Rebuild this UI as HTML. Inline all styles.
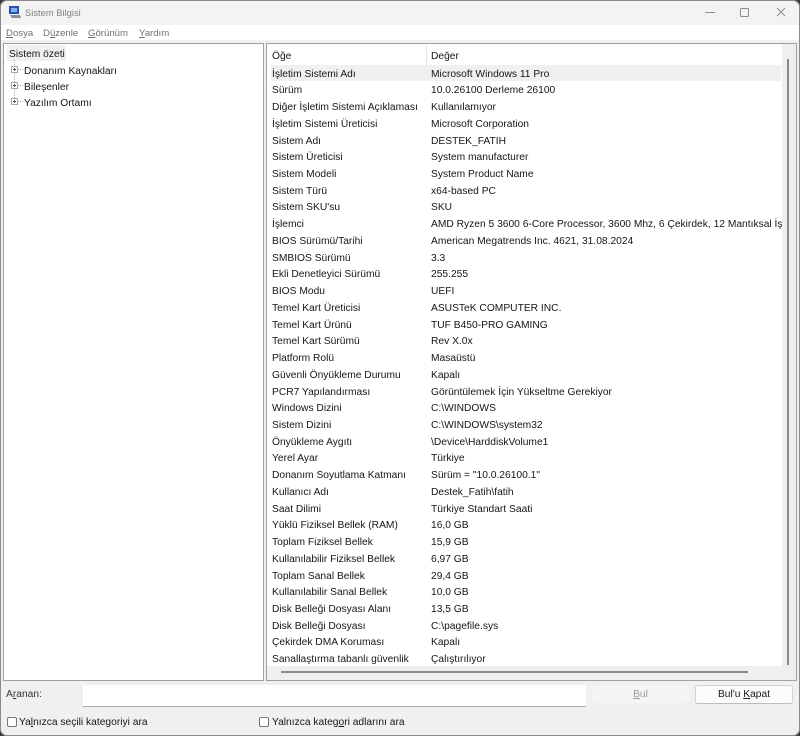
<!DOCTYPE html>
<html lang="tr"><head><meta charset="utf-8"><title>Sistem Bilgisi</title>
<style>
html,body{margin:0;padding:0;background:#3a3a3a}
#w{position:relative;width:800px;height:736px;background:#f0f0f0;overflow:hidden;font-family:"Liberation Sans",sans-serif;font-size:10.25px;color:#161616;border-radius:7px;box-shadow:inset 0 0 0 1px #8a8a8a}
.a{position:absolute;white-space:nowrap}
u{text-underline-offset:1px}
.r{position:absolute;white-space:nowrap;line-height:16px;height:16px}
.k{left:272px}.v{left:431px}
.box{position:absolute;background:#fff;border:1px solid #a0a0a0;box-sizing:border-box}
.m{position:absolute;top:27px;white-space:nowrap;line-height:13px;color:#707070;font-size:9.6px}
</style></head><body><div id="w">
<div class="a" style="left:1px;top:1px;width:798px;height:24px;background:#f3f3f3;border-radius:7px 7px 0 0"></div>
<svg class="a" style="left:8px;top:5px" width="14" height="14" viewBox="0 0 14 14"><rect x="1" y="1" width="10" height="8" fill="#2b4fb0"/><rect x="3" y="3" width="6" height="4" fill="#7fb0e8"/><path d="M2 10h10l1 3H4z" fill="#8a8fa8"/></svg>
<div class="a" style="left:25px;top:6px;color:#808080;font-size:9.4px;line-height:13px">Sistem Bilgisi</div>
<svg class="a" style="left:700px;top:0" width="100" height="26" viewBox="0 0 100 26" fill="none" stroke="#8c8c8c"><path d="M5 12.500h10"/><rect x="40.500" y="8.500" width="8" height="8" rx="1"/><path d="M77 8l8 8M85 8l-8 8"/></svg>
<div class="a" style="left:1px;top:25px;width:798px;height:15px;background:#fff"></div>
<div class="m" style="left:6px"><u>D</u>osya</div>
<div class="m" style="left:43px">D<u>ü</u>zenle</div>
<div class="m" style="left:88px"><u>G</u>örünüm</div>
<div class="m" style="left:139px"><u>Y</u>ardım</div>

<div class="box" style="left:3px;top:43px;width:261px;height:638px"></div>
<div class="a" style="left:7px;top:45px;width:59px;height:15.500px;background:#f0f0f0"></div>
<div class="r" style="left:9px;top:47px">Sistem özeti</div>
<div class="r" style="left:24px;top:64px">Donanım Kaynakları</div>
<div class="r" style="left:24px;top:80px">Bileşenler</div>
<div class="r" style="left:24px;top:96px">Yazılım Ortamı</div>
<svg class="a" style="left:10px;top:60px" width="14" height="50" viewBox="0 0 14 50" fill="none" stroke="#aaa"><path d="M4.500 0v6M4.500 13v10M4.500 29v10M8 9.500h5M8 25.500h5M8 41.500h5" stroke-dasharray="1 1"/><rect x="1.500" y="6.500" width="6" height="6" fill="#fff"/><rect x="1.500" y="22.500" width="6" height="6" fill="#fff"/><rect x="1.500" y="38.500" width="6" height="6" fill="#fff"/><path d="M3 9.500h3M4.500 8v3M3 25.500h3M4.500 24v3M3 41.500h3M4.500 40v3" stroke="#555"/></svg>

<div class="box" style="left:266px;top:43px;width:531px;height:638px"></div>
<div class="a" style="left:426px;top:45px;width:1px;height:20px;background:#e5e5e5"></div>
<div class="r" style="left:272px;top:49px">Öğe</div>
<div class="r" style="left:431px;top:49px">Değer</div>
<div class="a" style="left:271px;top:65px;width:510px;height:16px;background:#f0f0f0"></div>
<div class="a" style="left:782px;top:44px;width:14px;height:636px;background:#efefef"></div>
<div class="a" style="left:787px;top:59px;width:2px;height:606px;background:#8a8a8a"></div>
<div class="a" style="left:267px;top:666px;width:515px;height:14px;background:#efefef"></div>
<div class="a" style="left:281px;top:671px;width:467px;height:2px;background:#8a8a8a"></div>

<div style="position:absolute;left:0;top:1.700px;width:782px;height:664.300px;overflow:hidden">
<div class="r k" style="top:65px">İşletim Sistemi Adı</div><div class="r v" style="top:65px">Microsoft Windows 11 Pro</div>
<div class="r k" style="top:81.700px">Sürüm</div><div class="r v" style="top:81.700px">10.0.26100 Derleme 26100</div>
<div class="r k" style="top:98.500px">Diğer İşletim Sistemi Açıklaması</div><div class="r v" style="top:98.500px">Kullanılamıyor</div>
<div class="r k" style="top:115.200px">İşletim Sistemi Üreticisi</div><div class="r v" style="top:115.200px">Microsoft Corporation</div>
<div class="r k" style="top:131.900px">Sistem Adı</div><div class="r v" style="top:131.900px">DESTEK_FATIH</div>
<div class="r k" style="top:148.600px">Sistem Üreticisi</div><div class="r v" style="top:148.600px">System manufacturer</div>
<div class="r k" style="top:165.400px">Sistem Modeli</div><div class="r v" style="top:165.400px">System Product Name</div>
<div class="r k" style="top:182.100px">Sistem Türü</div><div class="r v" style="top:182.100px">x64-based PC</div>
<div class="r k" style="top:198.800px">Sistem SKU'su</div><div class="r v" style="top:198.800px">SKU</div>
<div class="r k" style="top:215.600px">İşlemci</div><div class="r v" style="top:215.600px">AMD Ryzen 5 3600 6-Core Processor, 3600 Mhz, 6 Çekirdek, 12 Mantıksal İş</div>
<div class="r k" style="top:232.300px">BIOS Sürümü/Tarihi</div><div class="r v" style="top:232.300px">American Megatrends Inc. 4621, 31.08.2024</div>
<div class="r k" style="top:249px">SMBIOS Sürümü</div><div class="r v" style="top:249px">3.3</div>
<div class="r k" style="top:265.800px">Ekli Denetleyici Sürümü</div><div class="r v" style="top:265.800px">255.255</div>
<div class="r k" style="top:282.500px">BIOS Modu</div><div class="r v" style="top:282.500px">UEFI</div>
<div class="r k" style="top:299.200px">Temel Kart Üreticisi</div><div class="r v" style="top:299.200px">ASUSTeK COMPUTER INC.</div>
<div class="r k" style="top:315.900px">Temel Kart Ürünü</div><div class="r v" style="top:315.900px">TUF B450-PRO GAMING</div>
<div class="r k" style="top:332.700px">Temel Kart Sürümü</div><div class="r v" style="top:332.700px">Rev X.0x</div>
<div class="r k" style="top:349.400px">Platform Rolü</div><div class="r v" style="top:349.400px">Masaüstü</div>
<div class="r k" style="top:366.100px">Güvenli Önyükleme Durumu</div><div class="r v" style="top:366.100px">Kapalı</div>
<div class="r k" style="top:382.900px">PCR7 Yapılandırması</div><div class="r v" style="top:382.900px">Görüntülemek İçin Yükseltme Gerekiyor</div>
<div class="r k" style="top:399.600px">Windows Dizini</div><div class="r v" style="top:399.600px">C:\WINDOWS</div>
<div class="r k" style="top:416.300px">Sistem Dizini</div><div class="r v" style="top:416.300px">C:\WINDOWS\system32</div>
<div class="r k" style="top:433.100px">Önyükleme Aygıtı</div><div class="r v" style="top:433.100px">\Device\HarddiskVolume1</div>
<div class="r k" style="top:449.800px">Yerel Ayar</div><div class="r v" style="top:449.800px">Türkiye</div>
<div class="r k" style="top:466.500px">Donanım Soyutlama Katmanı</div><div class="r v" style="top:466.500px">Sürüm = "10.0.26100.1"</div>
<div class="r k" style="top:483.200px">Kullanıcı Adı</div><div class="r v" style="top:483.200px">Destek_Fatih\fatih</div>
<div class="r k" style="top:500px">Saat Dilimi</div><div class="r v" style="top:500px">Türkiye Standart Saati</div>
<div class="r k" style="top:516.700px">Yüklü Fiziksel Bellek (RAM)</div><div class="r v" style="top:516.700px">16,0 GB</div>
<div class="r k" style="top:533.400px">Toplam Fiziksel Bellek</div><div class="r v" style="top:533.400px">15,9 GB</div>
<div class="r k" style="top:550.200px">Kullanılabilir Fiziksel Bellek</div><div class="r v" style="top:550.200px">6,97 GB</div>
<div class="r k" style="top:566.900px">Toplam Sanal Bellek</div><div class="r v" style="top:566.900px">29,4 GB</div>
<div class="r k" style="top:583.600px">Kullanılabilir Sanal Bellek</div><div class="r v" style="top:583.600px">10,0 GB</div>
<div class="r k" style="top:600.400px">Disk Belleği Dosyası Alanı</div><div class="r v" style="top:600.400px">13,5 GB</div>
<div class="r k" style="top:617.100px">Disk Belleği Dosyası</div><div class="r v" style="top:617.100px">C:\pagefile.sys</div>
<div class="r k" style="top:633.800px">Çekirdek DMA Koruması</div><div class="r v" style="top:633.800px">Kapalı</div>
<div class="r k" style="top:650.500px">Sanallaştırma tabanlı güvenlik</div><div class="r v" style="top:650.500px">Çalıştırılıyor</div>
</div>

<div class="r" style="left:6px;top:687px;color:#333">A<u>r</u>anan:</div>
<div class="a" style="left:83px;top:685px;width:503px;height:22px;background:#fff;border-bottom:1px solid #aaa;box-sizing:border-box"></div>
<div class="a" style="left:592px;top:686px;width:97px;height:17px;background:#f5f5f5;border-radius:3px;text-align:center;line-height:17px;color:#9a9a9a"><u>B</u>ul</div>
<div class="a" style="left:695px;top:685px;width:98px;height:18.500px;background:#fbfbfb;border:1px solid #d4d4d4;border-bottom-color:#bcbcbc;border-radius:3px;box-sizing:border-box;text-align:center;line-height:17px;color:#1a1a1a">Bul'u <u>K</u>apat</div>
<div class="a" style="left:7px;top:717px;width:8px;height:8px;background:#fff;border:1px solid #777;border-radius:2px"></div>
<div class="r" style="left:19px;top:715px">Ya<u>l</u>nızca seçili kategoriyi ara</div>
<div class="a" style="left:259px;top:717px;width:8px;height:8px;background:#fff;border:1px solid #777;border-radius:2px"></div>
<div class="r" style="left:272px;top:715px">Yalnızca kateg<u>o</u>ri adlarını ara</div>
</div></body></html>
